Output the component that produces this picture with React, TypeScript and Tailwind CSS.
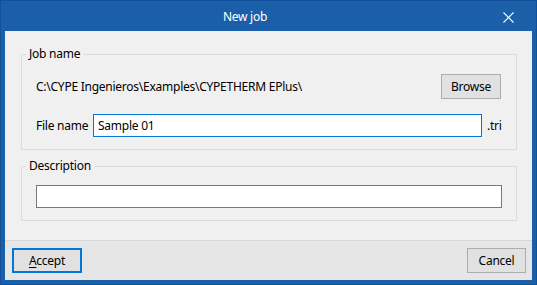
import React from "react";

export default function App() {
  const font = { fontFamily: '"Noto Sans", "Open Sans", sans-serif' };
  return (
    <div
      className="w-[537px] h-[285px] bg-[#1a5fa8] border border-[#11509a] flex flex-col px-[4px] pb-[4px] text-[12px] tracking-[-0.25px] text-black"
      style={font}
    >
      {/* Title bar */}
      <div className="h-[30px] flex items-center shrink-0">
        <div className="flex-1 text-center text-white text-[12px] leading-[16px] pt-[2px]">New job</div>
        <div className="w-[47px] flex items-center justify-center pt-[3px]">
          <svg width="11" height="11" viewBox="0 0 11 11">
            <path d="M0.5 0.5 L10.5 10.5 M10.5 0.5 L0.5 10.5" stroke="white" strokeWidth="1.1" />
          </svg>
        </div>
      </div>

      {/* Content */}
      <div className="flex-1 bg-[#f0f0f0] flex flex-col">
        <div className="flex-1 flex flex-col pt-[15px]">
          <fieldset className="ml-[16px] mr-[15px] border border-[#dcdcdc] p-0 pb-[12px] min-w-0">
            <legend className="ml-[4px] px-[3px] leading-[16px]">Job name</legend>
            <div className="flex items-center justify-between pl-[14px] pr-[15px] pt-[12px]">
              <span>C:\CYPE Ingenieros\Examples\CYPETHERM EPlus\</span>
              <button className="w-[60px] h-[25px] bg-[#e1e1e1] border border-[#adadad] leading-[16px]">
                Browse
              </button>
            </div>
            <div className="flex items-center pl-[14px] pt-[15px]">
              <span className="w-[57px] shrink-0">File name</span>
              <div className="w-[389px] h-[23px] bg-white border border-[#0078d7] flex items-center pl-[4px]">
                Sample 01
              </div>
              <span className="ml-[5px]">.tri</span>
            </div>
          </fieldset>

          <fieldset className="ml-[16px] mr-[15px] mt-[8px] border border-[#dcdcdc] p-0 pb-[12px] min-w-0">
            <legend className="ml-[4px] px-[3px] leading-[16px]">Description</legend>
            <div className="px-[14px] pt-[11px]">
              <div className="h-[23px] bg-white border border-[#7a7a7a]" />
            </div>
          </fieldset>
        </div>

        {/* Footer */}
        <div className="h-[40px] shrink-0 bg-[#e6e6e6] border-t border-[#d9d9d9] flex items-start justify-between pl-[7px] pr-[6px] pt-[7px]">
          <button className="w-[70px] h-[25px] bg-[#e1e1e1] border-2 border-[#0078d7] leading-[16px]">
            <span className="underline underline-offset-2">A</span>ccept
          </button>
          <button className="w-[59px] h-[25px] bg-[#e1e1e1] border border-[#adadad] leading-[16px]">
            Cancel
          </button>
        </div>
      </div>
    </div>
  );
}
